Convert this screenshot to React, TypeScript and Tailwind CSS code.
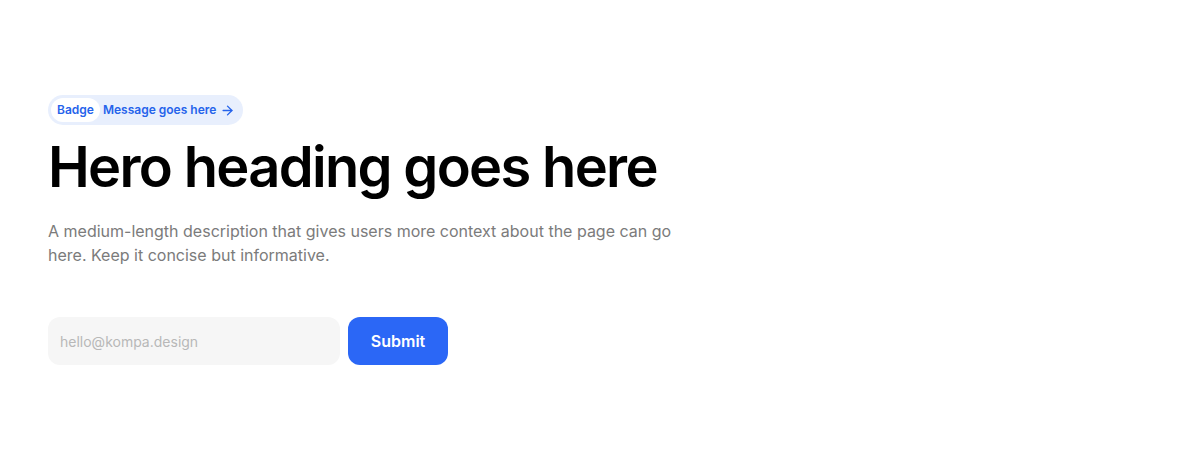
import { ArrowRight } from "lucide-react";

const Badge = () => (
  <a
    href="#"
    className="inline-flex items-center self-start rounded-full bg-[#e8effd] p-[3px] pr-[8px] text-[12px] font-semibold leading-4 text-[#2563eb]"
  >
    <span className="rounded-full bg-white px-[6px] py-1">Badge</span>
    <span className="pl-[3px]">Message goes here</span>
    <ArrowRight className="ml-[4px] h-[15px] w-[15px]" strokeWidth={2.2} />
  </a>
);

export default function App() {
  return (
    <div
      className="flex h-[460px] w-full flex-col justify-center bg-white px-12 text-black"
      style={{ fontFamily: "Inter, 'Noto Sans', sans-serif" }}
    >
      <div className="flex flex-col">
        <Badge />
        <h1 className="mt-[10px] text-[56px] font-semibold leading-[64px] tracking-[-0.03em] text-black">
          Hero heading goes here
        </h1>
        <p className="mt-[20px] max-w-[640px] text-[16px] leading-6 text-[#7b7b7b]">
          A medium-length description that gives users more context about the page can go
          here. Keep it concise but informative.
        </p>
        <form className="mt-[50px] flex gap-2" onSubmit={(e) => e.preventDefault()}>
          <input
            type="email"
            placeholder="hello@kompa.design"
            className="h-12 w-[292px] rounded-xl bg-[#f6f6f6] px-3 text-[14px] text-black outline-none placeholder:text-[#b8b8b8]"
          />
          <button
            type="submit"
            className="h-12 w-[100px] rounded-xl bg-[#2b67f6] text-[16px] font-semibold text-white"
          >
            Submit
          </button>
        </form>
      </div>
    </div>
  );
}
